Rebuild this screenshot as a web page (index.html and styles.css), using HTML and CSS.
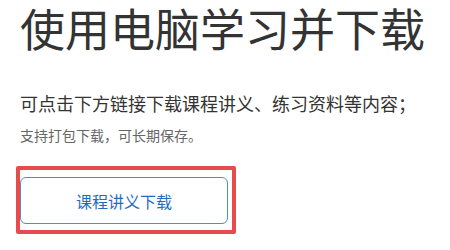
FILE: index.html
```html
<!DOCTYPE html>
<html lang="zh-CN">
<head>
<meta charset="utf-8">
<title>使用电脑学习并下载</title>
<link rel="stylesheet" href="styles.css">
</head>
<body>
<main class="page">
  <h1 class="title">使用电脑学习并下载</h1>
  <p class="lead">可点击下方链接下载课程讲义、练习资料等内容；</p>
  <p class="note">支持打包下载，可长期保存。</p>
  <div class="highlight">
    <a class="btn" href="#">课程讲义下载</a>
  </div>
</main>
</body>
</html>
```
FILE: styles.css
```css
html, body {
  margin: 0;
  padding: 0;
  background: #ffffff;
}
body {
  font-family: "Noto Sans CJK SC", "Noto Sans", sans-serif;
  color: #333333;
}
.page {
  padding: 1px 0 0 20px;
}
.title {
  margin: 0;
  font-size: 45px;
  line-height: 54px;
  font-weight: 400;
  color: #333333;
}
.lead {
  margin: 39px 0 0;
  font-size: 18px;
  line-height: 18px;
  color: #333333;
}
.note {
  margin: 16px 0 0;
  font-size: 14px;
  line-height: 14px;
  color: #666666;
}
.highlight {
  box-sizing: border-box;
  width: 220px;
  height: 68px;
  margin: 24px 0 0 -4px;
  padding: 7px 4px 6px 0;
  border: 4px solid #e84b4b;
  border-radius: 2px;
}
.btn {
  box-sizing: border-box;
  display: flex;
  align-items: center;
  justify-content: center;
  width: 208px;
  height: 47px;
  border: 1px solid #4a8fd6;
  border-radius: 6px;
  font-size: 16px;
  color: #1f6cc4;
  text-decoration: none;
}
```
